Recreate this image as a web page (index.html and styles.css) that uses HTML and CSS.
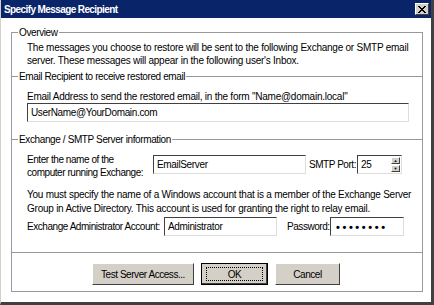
FILE: index.html
```html
<!DOCTYPE html>
<html lang="en">

<head>
    <meta charset="UTF-8">
    <title>Specify Message Recipient</title>
    <link rel="stylesheet" href="styles.css">
</head>

<body>
    <div class="window">
        <div class="titlebar">
            <div class="title">Specify Message Recipient</div>
            <div class="close">
                <svg width="10" height="9" viewBox="0 0 10 9">
                    <path d="M1 1 L8 8 M2 1 L9 8 M8 1 L1 8 M9 1 L2 8" stroke="#000" stroke-width="1" />
                </svg>
            </div>
        </div>
        <div class="frame">
            <div class="section overview">
                <div class="legend">Overview</div>
                <p>The messages you choose to restore will be sent to the following Exchange or SMTP email<br>
                    server. These messages will appear in the following user's Inbox.</p>
            </div>
            <div class="section recipient">
                <div class="legend">Email Recipient to receive restored email</div>
                <p>Email Address to send the restored email, in the form "Name@domain.local"</p>
                <div class="field wide">UserName@YourDomain.com</div>
            </div>
            <div class="section server">
                <div class="legend">Exchange / SMTP Server information</div>
                <div class="row host">
                    <div class="label">Enter the name of the<br>computer running Exchange:</div>
                    <div class="field server-name">EmailServer</div>
                    <div class="port-label">SMTP Port:</div>
                    <div class="field port">
                        <span>25</span>
                        <div class="spin">
                            <div class="arrow">&#9650;</div>
                            <div class="arrow">&#9660;</div>
                        </div>
                    </div>
                </div>
                <p>You must specify the name of a Windows account that is a member of the Exchange Server<br>
                    Group in Active Directory. This account is used for granting the right to relay email.</p>
                <div class="row admin">
                    <div class="label">Exchange Administrator Account:</div>
                    <div class="field account">Administrator</div>
                    <div class="pass-label">Password:</div>
                    <div class="field password">&#8226;&#8226;&#8226;&#8226;&#8226;&#8226;&#8226;&#8226;</div>
                </div>
            </div>
            <div class="section buttons">
                <div class="btn test">Test Server Access...</div>
                <div class="btn ok"><span>OK</span></div>
                <div class="btn cancel">Cancel</div>
            </div>
        </div>
    </div>
</body>

</html>
```

FILE: styles.css
```css
body {
    margin: 0;
    font-family: "Liberation Sans", Arial, sans-serif;
    font-size: 10px;
    letter-spacing: -0.45px;
    color: #000;
}

.window {
    width: 434px;
    height: 305px;
    box-sizing: border-box;
    background: #fff;
    border-left: 1px solid #d4d0c8;
    border-right: 3px solid #404040;
    border-bottom: 3px solid #404040;
    overflow: hidden;
}

.titlebar {
    height: 18px;
    background: #0a246a;
    display: flex;
    align-items: center;
    justify-content: space-between;
    padding: 0 2px 0 3px;
}

.title {
    color: #fff;
    font-weight: bold;
    font-size: 10px;
    letter-spacing: -0.6px;
}

.close {
    width: 14px;
    height: 12px;
    box-sizing: border-box;
    background: #d4d0c8;
    border: 1px solid;
    border-color: #fff #404040 #404040 #fff;
    display: flex;
    align-items: center;
    justify-content: center;
}

.frame {
    margin: 14px 8px 0 10px;
    border: 1px solid #999;
    box-shadow: inset 1px 1px 0 #fff;
}

.section {
    padding: 0 14px 0 15px;
}

.section+.section {
    border-top: 1px solid #999;
}

.legend {
    width: fit-content;
    margin: -7px 0 0 -9px;
    padding: 0 1px;
    background: #fff;
    line-height: 13px;
    letter-spacing: -0.38px;
}

p {
    margin: 0;
    line-height: 13px;
    letter-spacing: -0.24px;
    white-space: nowrap;
}

.overview {
    padding-bottom: 9px;
}

.overview p {
    margin-top: 2px;
}

.recipient p {
    margin-top: 7px;
}

.field {
    box-sizing: border-box;
    height: 19px;
    border: 1px solid #000;
    border-color: #404040 #ddd #ddd #404040;
    padding: 0 3px;
    display: flex;
    align-items: center;
    background: #fff;
    letter-spacing: -0.35px;
}

.wide {
    margin: 0 0 17px 0;
    width: 382px;
}

.row {
    display: flex;
    align-items: center;
    white-space: nowrap;
}

.host {
    margin-top: 4px;
}

.server .label {
    width: 126px;
    line-height: 13px;
    padding-top: 3px;
}

.server-name {
    width: 153px;
}

.port-label {
    margin-left: 3px;
    width: 48px;
}

.port {
    width: 45px;
    padding-right: 1px;
    justify-content: space-between;
}

.spin {
    display: flex;
    flex-direction: column;
    gap: 1px;
}

.arrow {
    width: 9px;
    height: 7px;
    box-sizing: border-box;
    background: #d4d0c8;
    border: 1px solid;
    border-color: #fff #404040 #404040 #fff;
    font-size: 4px;
    line-height: 5px;
    text-align: center;
    letter-spacing: 0;
}

.server p {
    margin-top: 9px;
    line-height: 14px;
}

.admin {
    margin-top: 1px;
    padding-bottom: 16px;
}

.admin .label {
    width: 137px;
    padding-top: 0;
}

.account {
    width: 113px;
}

.pass-label {
    margin-left: 10px;
    width: 43px;
}

.password {
    width: 74px;
    padding-left: 5px;
    font-size: 11px;
    font-weight: bold;
    letter-spacing: 2.6px;
}

.buttons {
    display: flex;
    gap: 7px;
    padding: 10px 0 6px 80px;
}

.btn {
    box-sizing: border-box;
    height: 22px;
    background: #d4d0c8;
    border: 1px solid;
    border-color: #fff #404040 #404040 #fff;
    display: flex;
    align-items: center;
    justify-content: center;
}

.test {
    width: 102px;
}

.ok {
    width: 67px;
    border: 1px solid #000;
    box-shadow: inset -1px -1px 0 #404040;
}

.ok span {
    width: 57px;
    height: 14px;
    border: 1px dotted #000;
    display: flex;
    align-items: center;
    justify-content: center;
    box-sizing: border-box;
}

.cancel {
    width: 65px;
}
```
